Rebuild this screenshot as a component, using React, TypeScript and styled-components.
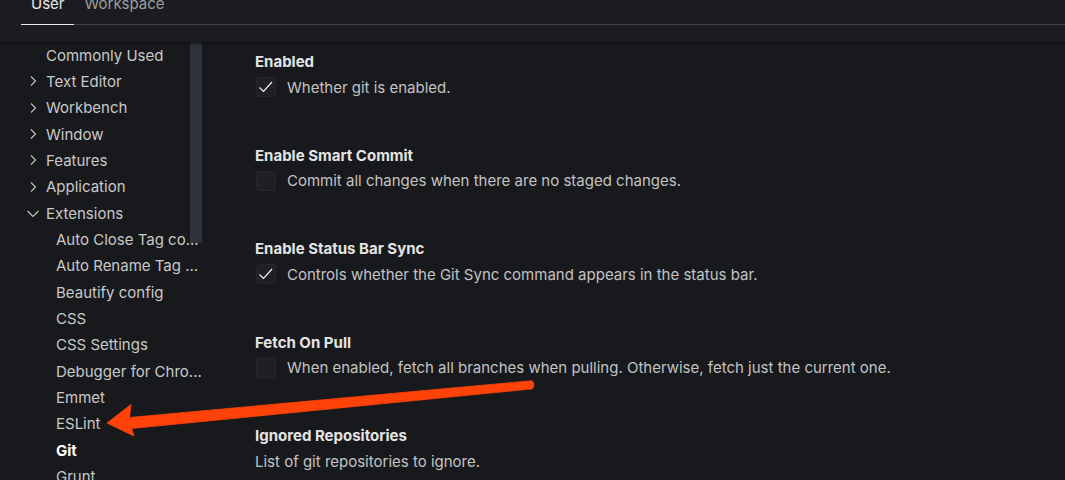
import React from "react";
import styled, { createGlobalStyle } from "styled-components";

const GlobalStyle = createGlobalStyle`
  html, body {
    margin: 0;
    padding: 0;
    background: #18191d;
  }
  body {
    font-family: Inter, "Noto Sans", sans-serif;
    -webkit-font-smoothing: antialiased;
  }
`;

type TreeItem = {
  label: string;
  level: 0 | 1;
  chevron?: "right" | "down";
  active?: boolean;
};

const tree: TreeItem[] = [
  { label: "Commonly Used", level: 0 },
  { label: "Text Editor", level: 0, chevron: "right" },
  { label: "Workbench", level: 0, chevron: "right" },
  { label: "Window", level: 0, chevron: "right" },
  { label: "Features", level: 0, chevron: "right" },
  { label: "Application", level: 0, chevron: "right" },
  { label: "Extensions", level: 0, chevron: "down" },
  { label: "Auto Close Tag co...", level: 1 },
  { label: "Auto Rename Tag ...", level: 1 },
  { label: "Beautify config", level: 1 },
  { label: "CSS", level: 1 },
  { label: "CSS Settings", level: 1 },
  { label: "Debugger for Chro...", level: 1 },
  { label: "Emmet", level: 1 },
  { label: "ESLint", level: 1 },
  { label: "Git", level: 1, active: true },
  { label: "Grunt", level: 1 },
];

type Setting = {
  title: string;
  description: string;
  checkbox?: boolean;
  checked?: boolean;
};

const settings: Setting[] = [
  { title: "Enabled", description: "Whether git is enabled.", checkbox: true, checked: true },
  {
    title: "Enable Smart Commit",
    description: "Commit all changes when there are no staged changes.",
    checkbox: true,
  },
  {
    title: "Enable Status Bar Sync",
    description: "Controls whether the Git Sync command appears in the status bar.",
    checkbox: true,
    checked: true,
  },
  {
    title: "Fetch On Pull",
    description:
      "When enabled, fetch all branches when pulling. Otherwise, fetch just the current one.",
    checkbox: true,
  },
  { title: "Ignored Repositories", description: "List of git repositories to ignore." },
];

function Chevron({ dir }: { dir: "right" | "down" }) {
  return (
    <ChevronBox>
      <svg width="16" height="16" viewBox="0 0 16 16" fill="none">
        {dir === "right" ? (
          <path d="M6 3.5 L10.5 8 L6 12.5" stroke="#c5c5c5" strokeWidth="1.1" />
        ) : (
          <path d="M2.5 6 L8 11.5 L13.5 6" stroke="#c5c5c5" strokeWidth="1.1" />
        )}
      </svg>
    </ChevronBox>
  );
}

function Arrow() {
  return (
    <ArrowLayer width="1065" height="480" viewBox="0 0 1065 480">
      <path
        d="M107 423 L131 404.5 L129.5 417.5 L531 380.8 C534.5 380.6 535 388.6 531.5 389 L131.5 428.5 L134 436 Z"
        fill="#ff4208"
        stroke="#ff4208"
        strokeWidth="0.8"
        strokeLinejoin="round"
      />
    </ArrowLayer>
  );
}

export default function App() {
  return (
    <Page>
      <GlobalStyle />
      <Header>
        <TabBar>
          <Tab active>User</Tab>
          <Tab>Workspace</Tab>
          <TabRest />
        </TabBar>
      </Header>
      <Body>
        <Sidebar>
          {tree.map((item) => (
            <TreeRow key={item.label} level={item.level} active={item.active}>
              {item.chevron ? <Chevron dir={item.chevron} /> : null}
              <span>{item.label}</span>
            </TreeRow>
          ))}
          <Scrollbar />
        </Sidebar>
        <Content>
          {settings.map((s) => (
            <Section key={s.title}>
              <Title>{s.title}</Title>
              <DescRow>
                {s.checkbox ? (
                  <Checkbox>
                    {s.checked ? (
                      <svg width="18" height="18" viewBox="0 0 18 18" fill="none">
                        <path
                          d="M2.5 9.5 L6.5 13.5 L15 4"
                          stroke="#f2f2f2"
                          strokeWidth="1.2"
                        />
                      </svg>
                    ) : null}
                  </Checkbox>
                ) : null}
                <Description>{s.description}</Description>
              </DescRow>
            </Section>
          ))}
        </Content>
      </Body>
      <Arrow />
    </Page>
  );
}

const Page = styled.div`
  position: relative;
  width: 1065px;
  height: 480px;
  overflow: hidden;
  background: #18191d;
`;

const Header = styled.div`
  display: flex;
  flex-direction: column;
  height: 42px;
  background: #1b1c20;
  box-shadow: 0 1px 3px #0b0c0e;
  position: relative;
  z-index: 1;
`;

const TabBar = styled.div`
  display: flex;
  align-items: stretch;
  height: 37px;
  margin-top: -12px;
  padding-left: 21px;
`;

const Tab = styled.div<{ active?: boolean }>`
  display: flex;
  align-items: flex-end;
  padding: 0 10px 10px;
  font-size: 15px;
  line-height: 20px;
  color: ${(p) => (p.active ? "#e8e8e8" : "#9d9d9d")};
  border-bottom: 1px solid ${(p) => (p.active ? "#e8e8e8" : "#3f4044")};
`;

const TabRest = styled.div`
  flex: 1;
  border-bottom: 1px solid #3f4044;
`;

const Body = styled.div`
  display: grid;
  grid-template-columns: 202px 1fr;
`;

const Sidebar = styled.div`
  position: relative;
  display: flex;
  flex-direction: column;
`;

const TreeRow = styled.div<{ level: 0 | 1; active?: boolean }>`
  display: flex;
  align-items: center;
  height: 26.33px;
  padding-left: ${(p) => (p.level === 0 ? "46px" : "56px")};
  font-size: 15px;
  color: ${(p) => (p.active ? "#ffffff" : "#c9c9c9")};
  font-weight: ${(p) => (p.active ? 700 : 400)};
  white-space: nowrap;
  position: relative;
`;

const ChevronBox = styled.span`
  position: absolute;
  left: 25px;
  top: 5px;
  width: 16px;
  height: 16px;
  display: flex;
`;

const Scrollbar = styled.div`
  position: absolute;
  top: 0;
  left: 190px;
  width: 12px;
  height: 201px;
  background: #2f323b;
`;

const Content = styled.div`
  padding: 10px 0 0 53px;
`;

const Section = styled.div`
  height: 93.5px;
`;

const Title = styled.div`
  font-size: 15px;
  line-height: 20px;
  font-weight: 700;
  color: #e4e4e4;
  margin-bottom: 5px;
`;

const DescRow = styled.div`
  display: flex;
  align-items: center;
  gap: 11px;
  height: 20px;
`;

const Checkbox = styled.span`
  box-sizing: border-box;
  width: 20px;
  height: 20px;
  margin-left: 1px;
  border-radius: 3px;
  background: #1f2024;
  border: 1px solid #26272b;
  display: flex;
  align-items: center;
  justify-content: center;
`;

const Description = styled.span`
  font-size: 15px;
  color: #c3c3c3;
  white-space: nowrap;
`;

const ArrowLayer = styled.svg`
  position: absolute;
  left: 0;
  top: 0;
  pointer-events: none;
  z-index: 2;
`;
